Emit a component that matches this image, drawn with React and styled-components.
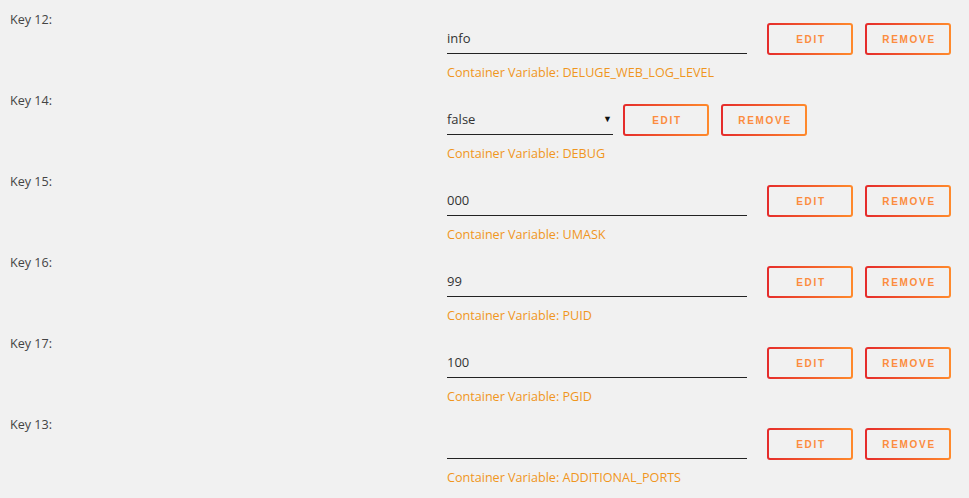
import React from "react";
import styled, { createGlobalStyle } from "styled-components";

const GlobalStyle = createGlobalStyle`
  body {
    margin: 0;
    background: #f1f1f1;
    font-family: "Open Sans", "Liberation Sans", sans-serif;
  }
`;

const List = styled.div`
  width: 969px;
  height: 498px;
  overflow: hidden;
  background: #f1f1f1;
`;

const Row = styled.div`
  display: flex;
  height: 81px;
`;

const Label = styled.div`
  width: 437px;
  padding-left: 10px;
  margin-top: 12px;
  font-size: 12.6px;
  line-height: 16px;
  color: #444;
`;

const Field = styled.div`
  display: flex;
  flex-direction: column;
`;

const Controls = styled.div`
  display: flex;
  align-items: flex-start;
  margin-top: 23px;
`;

const Input = styled.div`
  position: relative;
  box-sizing: border-box;
  width: ${(p) => (p.$select ? 166 : 300)}px;
  height: 31px;
  margin-right: ${(p) => (p.$select ? 10 : 20)}px;
  border-bottom: 1px solid #222;
  font-size: 13px;
  line-height: 30px;
  color: #333;
`;

const Caret = styled.span`
  position: absolute;
  right: 1px;
  top: 0;
  font-size: 9px;
  color: #111;
`;

const Button = styled.button`
  box-sizing: border-box;
  width: 86px;
  height: 32px;
  margin-right: 12px;
  border: 2px solid transparent;
  border-radius: 3px;
  background: linear-gradient(#f1f1f1, #f1f1f1) padding-box,
    linear-gradient(90deg, #e52b2b, #ff8a2c) border-box;
  color: #fc8c3e;
  font-family: "Liberation Sans", "DejaVu Sans", sans-serif;
  font-weight: bold;
  font-size: 10px;
  letter-spacing: 1.7px;
  padding: 0 0 0 2px;
  cursor: pointer;
`;

const Helper = styled.div`
  margin-top: 10px;
  font-size: 12.6px;
  line-height: 16px;
  color: #f0961d;
`;

const rows = [
  { key: "Key 12:", value: "info", variable: "DELUGE_WEB_LOG_LEVEL" },
  { key: "Key 14:", value: "false", variable: "DEBUG", select: true },
  { key: "Key 15:", value: "000", variable: "UMASK" },
  { key: "Key 16:", value: "99", variable: "PUID" },
  { key: "Key 17:", value: "100", variable: "PGID" },
  { key: "Key 13:", value: "", variable: "ADDITIONAL_PORTS" },
];

const App = () => {
  return (
    <List>
      <GlobalStyle />
      {rows.map((r) => (
        <Row key={r.key}>
          <Label>{r.key}</Label>
          <Field>
            <Controls>
              <Input $select={r.select}>
                {r.value}
                {r.select && <Caret>▼</Caret>}
              </Input>
              <Button>EDIT</Button>
              <Button>REMOVE</Button>
            </Controls>
            <Helper>Container Variable: {r.variable}</Helper>
          </Field>
        </Row>
      ))}
    </List>
  );
};

export default App;
